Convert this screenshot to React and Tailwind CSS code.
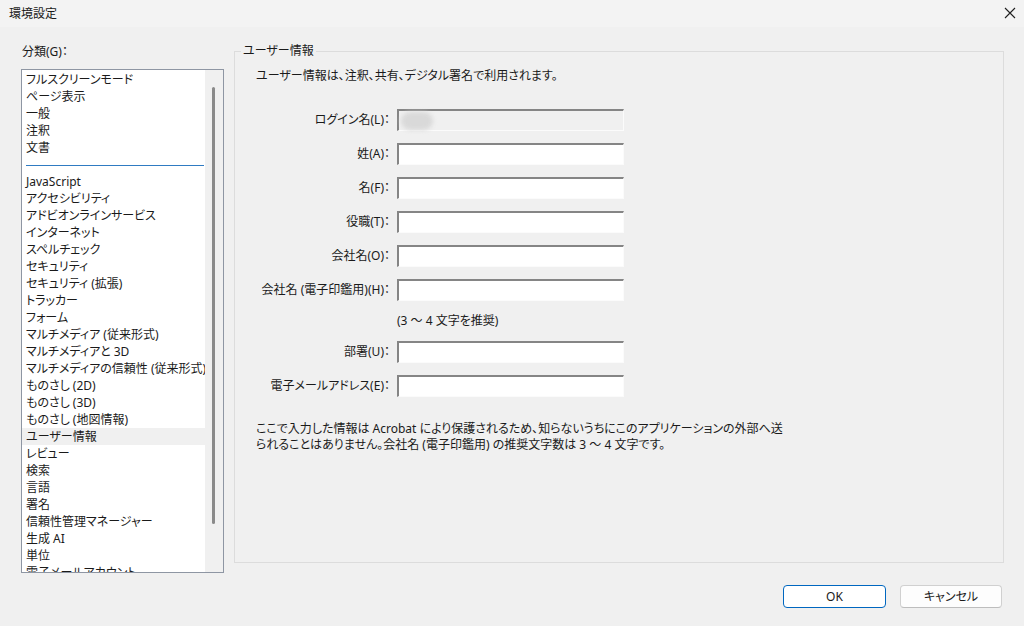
import React from "react";

const categories = [
    "JavaScript",
    "アクセシビリティ",
    "アドビオンラインサービス",
    "インターネット",
    "スペルチェック",
    "セキュリティ",
    "セキュリティ (拡張)",
    "トラッカー",
    "フォーム",
    "マルチメディア (従来形式)",
    "マルチメディアと 3D",
    "マルチメディアの信頼性 (従来形式)",
    "ものさし (2D)",
    "ものさし (3D)",
    "ものさし (地図情報)",
    "ユーザー情報",
    "レビュー",
    "検索",
    "言語",
    "署名",
    "信頼性管理マネージャー",
    "生成 AI",
    "単位",
    "電子メールアカウント",
];

const topCategories = ["フルスクリーンモード", "ページ表示", "一般", "注釈", "文書"];

const TextField = ({ disabled, children }) => (
    <div
        className={`w-[227px] h-[22px] flex items-center border-t-2 border-l-2 border-b border-r border-t-[#858585] border-l-[#858585] border-b-[#fbfbfb] border-r-[#fbfbfb] ${disabled ? "bg-[#f0f0f0]" : "bg-white"}`}
    >
        {children}
    </div>
);

const FormRow = ({ label, disabled, children }) => (
    <div className="flex items-center h-[22px]">
        <div className="w-[134px] flex justify-end whitespace-nowrap">{label}</div>
        <div className="ml-[7px]">
            <TextField disabled={disabled}>{children}</TextField>
        </div>
    </div>
);

export default function App() {
    return (
        <div className="w-[1024px] h-[626px] bg-[#f0f0f0] flex flex-col text-[12px] leading-[16px] text-[#1a1a1a] font-['Noto_Sans','Noto_Sans_CJK_JP',sans-serif] [font-feature-settings:'palt'] overflow-hidden">
            {/* title bar */}
            <div className="h-[27px] flex items-center justify-between pl-[9px] pr-[7px] bg-[#f3f3f3]">
                <span>環境設定</span>
                <svg width="12" height="12" viewBox="0 0 12 12" className="mt-[-2px] mr-[1px]">
                    <path d="M1 1 L11 11 M11 1 L1 11" stroke="#1f1f1f" strokeWidth="1.1" />
                </svg>
            </div>

            {/* main */}
            <div className="h-[558px] flex pl-[21px] pr-[20px] gap-[10px]">
                {/* category list */}
                <div className="w-[203px] pt-[17px] flex flex-col">
                    <div className="h-[16px] pl-[1px]">分類(G)：</div>
                    <div className="mt-[9px] h-[504px] border border-[#8e96a3] flex overflow-hidden">
                        <div className="w-[183px] bg-white pt-[1px]">
                            {topCategories.map((c) => (
                                <div key={c} className="h-[17px] leading-[17px] pl-[4px] whitespace-nowrap">
                                    {c}
                                </div>
                            ))}
                            <div className="h-[17px] pt-[9px] pl-[4px] pr-[1px]">
                                <div className="h-px bg-[#2f7bc2]" />
                            </div>
                            {categories.map((c) => (
                                <div
                                    key={c}
                                    className={`h-[17px] leading-[17px] pl-[4px] whitespace-nowrap ${c === "ユーザー情報" ? "bg-[#f0f0f0]" : ""}`}
                                >
                                    {c}
                                </div>
                            ))}
                        </div>
                        <div className="w-[18px] bg-[#f0f0f0] pt-[17px] pl-[7px]">
                            <div className="w-[3px] h-[437px] rounded-full bg-[#8a8a8a]" />
                        </div>
                    </div>
                </div>

                {/* user info group */}
                <div className="flex-1 pt-[16px]">
                    <fieldset className="h-[520px] border border-[#dcdcdc] pl-[21px] pr-[10px]">
                        <legend className="-ml-[15px] px-[2px]">ユーザー情報</legend>
                        <p className="mt-[9px]">ユーザー情報は、注釈、共有、デジタル署名で利用されます。</p>

                        <div className="mt-[25px] flex flex-col gap-[12px]">
                            <FormRow label="ログイン名(L)：" disabled>
                                <div className="ml-[2px] w-[32px] h-[18px] rounded-full bg-[#d9d9d9] blur-[2px]" />
                            </FormRow>
                            <FormRow label="姓(A)：" />
                            <FormRow label="名(F)：" />
                            <FormRow label="役職(T)：" />
                            <FormRow label="会社名(O)：" />
                            <FormRow label="会社名 (電子印鑑用)(H)：" />
                            <div className="h-[16px] pl-[141px]">(3 ～ 4 文字を推奨)</div>
                            <FormRow label="部署(U)：" />
                            <FormRow label="電子メールアドレス(E)：" />
                        </div>

                        <p className="mt-[24px] whitespace-nowrap">
                            ここで入力した情報は Acrobat により保護されるため、知らないうちにこのアプリケーションの外部へ送
                            <br />
                            られることはありません。会社名 (電子印鑑用) の推奨文字数は 3 ～ 4 文字です。
                        </p>
                    </fieldset>
                </div>
            </div>

            {/* footer buttons */}
            <div className="h-[23px] flex justify-end pr-[22px] gap-[14px]">
                <button className="w-[103px] h-[23px] rounded-[4px] border border-[#0067c0] bg-white">OK</button>
                <button className="w-[102px] h-[23px] rounded-[4px] border border-[#d0d0d0] border-b-[#bdbdbd] bg-[#fdfdfd]">
                    キャンセル
                </button>
            </div>
        </div>
    );
}
